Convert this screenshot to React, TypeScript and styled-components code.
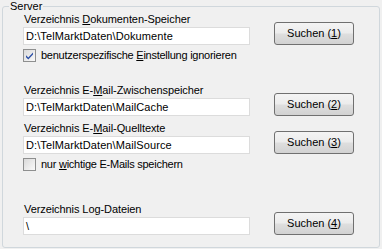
import React from 'react';
import styled, { createGlobalStyle } from 'styled-components';

const GlobalStyle = createGlobalStyle`
  html, body {
    margin: 0;
    padding: 0;
    background: #f0f0f0;
  }
  body {
    font-family: "Liberation Sans", Arial, sans-serif;
    font-size: 11px;
    color: #000;
  }
`;

const Group = styled.fieldset`
  box-sizing: border-box;
  width: 378px;
  height: 248px;
  margin: 0 2px;
  padding: 0 0 0 20px;
  border: 1px solid #d0d7dc;
  border-radius: 3px;
  min-width: 0;
`;

const Legend = styled.legend`
  margin-left: -14px;
  padding: 0 1px;
  line-height: 13px;
`;

const Section = styled.div<{ $top: number }>`
  display: grid;
  grid-template-columns: 227px 80px;
  grid-template-rows: 13px 18px auto;
  column-gap: 24px;
  row-gap: 1px;
  margin-top: ${(p) => p.$top}px;
`;

const Label = styled.div`
  line-height: 13px;
  padding-left: 1px;
  white-space: nowrap;
  letter-spacing: -0.08px;
`;

const PathInput = styled.div`
  grid-column: 1;
  box-sizing: border-box;
  height: 18px;
  background: #fff;
  border: 1px solid #dcdcdc;
  padding: 2px 2px 0;
  line-height: 13px;
  white-space: nowrap;
  letter-spacing: 0.1px;
`;

const Button = styled.button`
  grid-column: 2;
  grid-row: 1 / 3;
  align-self: end;
  box-sizing: border-box;
  width: 80px;
  height: 23px;
  margin: 0;
  padding: 0;
  border: 1px solid #707070;
  border-radius: 3px;
  background: linear-gradient(#f4f4f4 0%, #ececec 48%, #dedede 52%, #d2d2d2 100%);
  font: inherit;
  color: #000;
  line-height: 13px;
`;

const CheckRow = styled.div`
  grid-column: 1 / 3;
  display: flex;
  align-items: center;
  gap: 5px;
  margin-top: 3px;
  line-height: 13px;
  white-space: nowrap;
  letter-spacing: -0.25px;
`;

const U = styled.span`
  text-decoration: underline;
  text-underline-offset: 1px;
`;

const CheckBox = ({ checked }: { checked: boolean }) => (
  <svg width="13" height="13" viewBox="0 0 13 13">
    <defs>
      <linearGradient id="cbg" x1="0" y1="0" x2="1" y2="1">
        <stop offset="0" stopColor="#d8d8d8" />
        <stop offset="1" stopColor="#fbfbfb" />
      </linearGradient>
    </defs>
    <rect x="0.5" y="0.5" width="12" height="12" fill="url(#cbg)" stroke="#8e8f8f" />
    {checked && (
      <path d="M3 6.2 L5.3 8.6 L10 3.6 L10 5.6 L5.3 10.6 L3 8.2 Z" fill="#2b4fa6" />
    )}
  </svg>
);

const App = () => (
  <>
    <GlobalStyle />
    <Group>
      <Legend>Server</Legend>
      <Section $top={0}>
        <Label>
          Verzeichnis <U>D</U>okumenten-Speicher
        </Label>
        <PathInput>D:\TelMarktDaten\Dokumente</PathInput>
        <Button>
          Suchen (<U>1</U>)
        </Button>
        <CheckRow>
          <CheckBox checked />
          <span>
            benutzerspezifische <U>E</U>instellung ignorieren
          </span>
        </CheckRow>
      </Section>
      <Section $top={22}>
        <Label>
          Verzeichnis E-<U>M</U>ail-Zwischenspeicher
        </Label>
        <PathInput>D:\TelMarktDaten\MailCache</PathInput>
        <Button>
          Suchen (<U>2</U>)
        </Button>
      </Section>
      <Section $top={5}>
        <Label>
          Verzeichnis E-<U>M</U>ail-Quelltexte
        </Label>
        <PathInput>D:\TelMarktDaten\MailSource</PathInput>
        <Button>
          Suchen (<U>3</U>)
        </Button>
        <CheckRow>
          <CheckBox checked={false} />
          <span>
            nur <U>w</U>ichtige E-Mails speichern
          </span>
        </CheckRow>
      </Section>
      <Section $top={32}>
        <Label>Verzeichnis Log-Dateien</Label>
        <PathInput>\</PathInput>
        <Button>
          Suchen (<U>4</U>)
        </Button>
      </Section>
    </Group>
  </>
);

export default App;
